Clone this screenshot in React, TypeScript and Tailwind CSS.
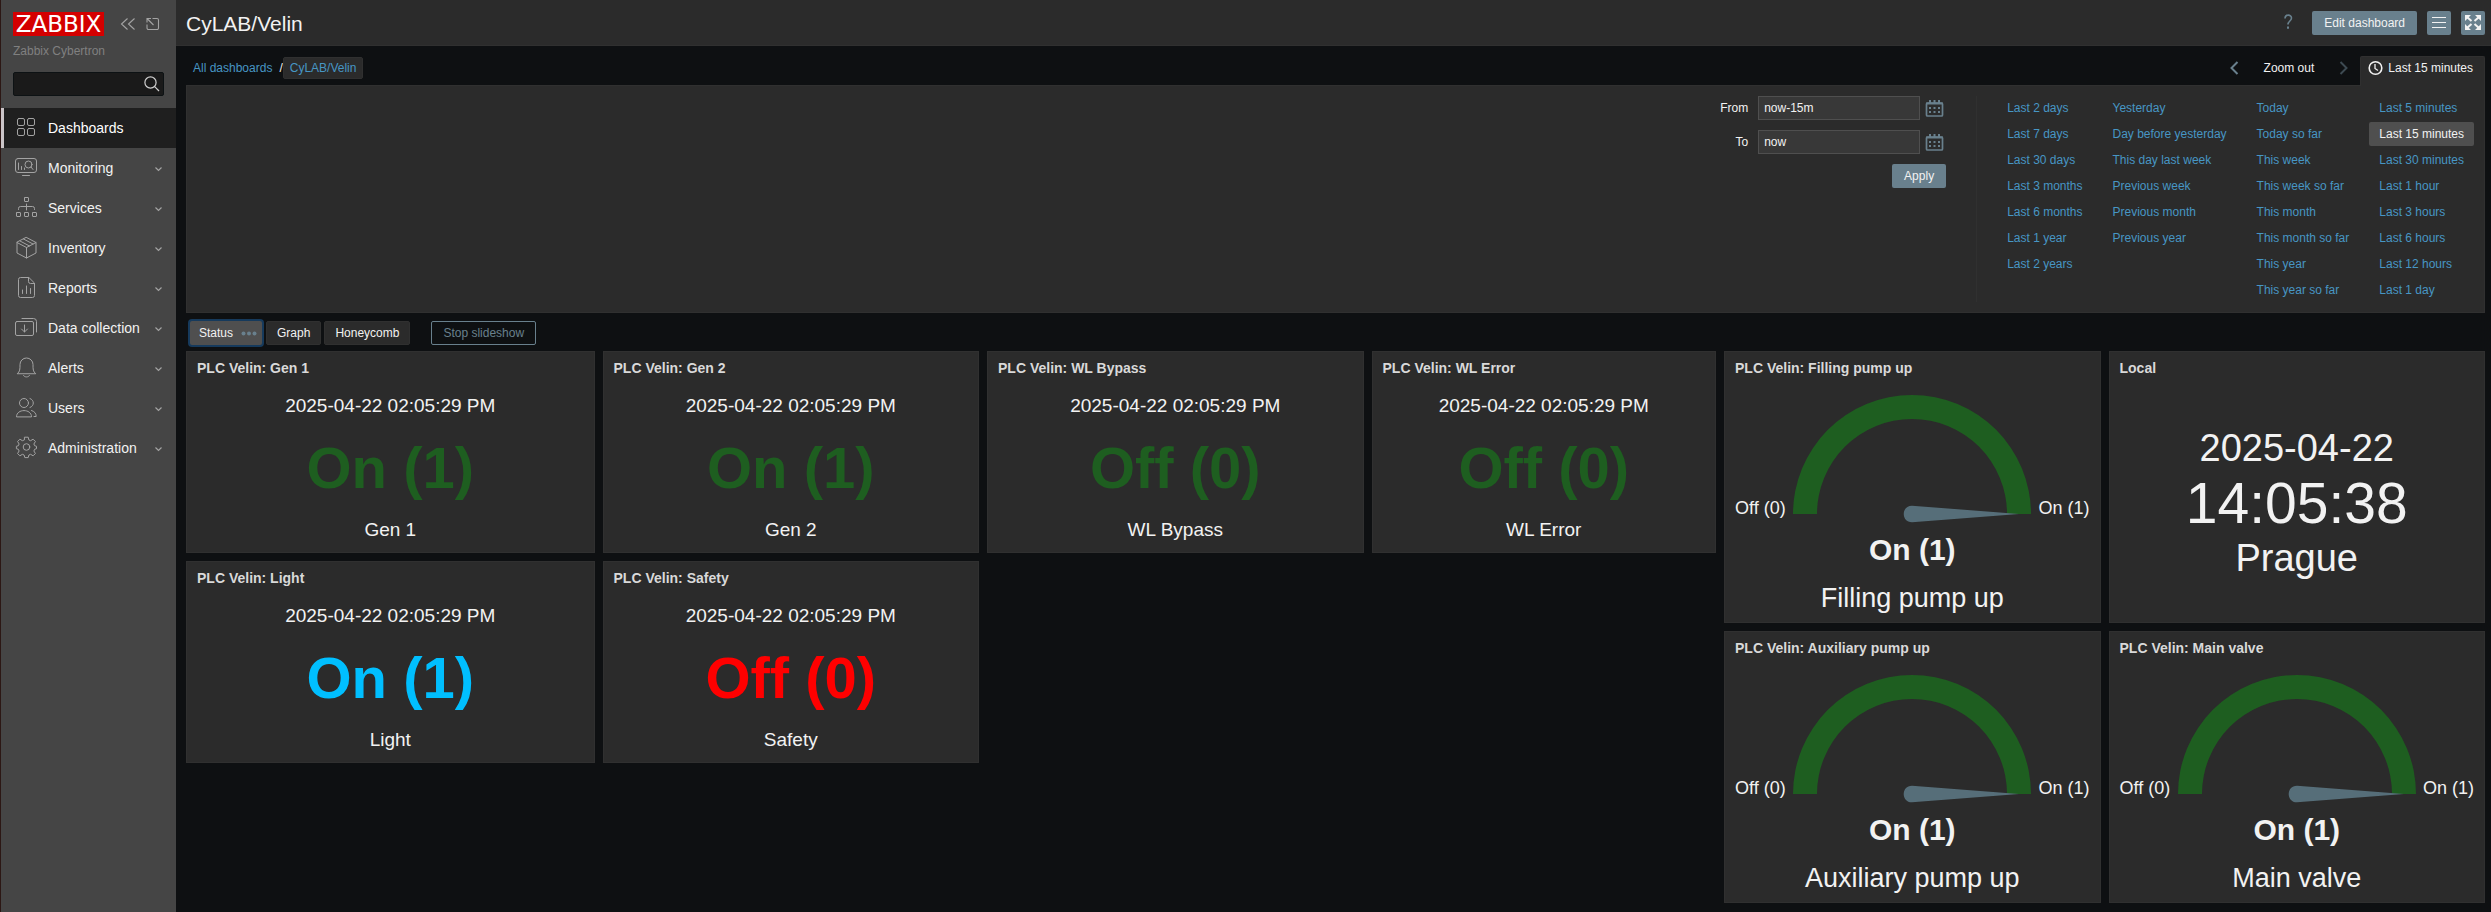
import React from "react";

type IconProps = { children: React.ReactNode };

function NavIcon({ children }: IconProps) {
  return (
    <svg
      className="size-6 shrink-0 text-[#a3a3a3]"
      viewBox="0 0 24 24"
      fill="none"
      stroke="currentColor"
      strokeWidth="1"
      strokeLinecap="round"
      strokeLinejoin="round"
      aria-hidden="true"
    >
      {children}
    </svg>
  );
}

const navItems: { label: string; icon: React.ReactNode }[] = [
  {
    label: "Dashboards",
    icon: (
      <>
        <rect x="3.5" y="2.5" width="7" height="7" rx="1.5" />
        <rect x="13.5" y="2.5" width="7" height="7" rx="1.5" />
        <rect x="3.5" y="12.5" width="7" height="7" rx="1.5" />
        <rect x="13.5" y="12.5" width="7" height="7" rx="1.5" />
      </>
    ),
  },
  {
    label: "Monitoring",
    icon: (
      <>
        <rect x="1.5" y="2.5" width="21" height="14" rx="2.5" />
        <path d="M8.5 19.5h7M4.5 7v6.500M7.5 10.500v3M10.500 12v1.500M17 11l2 2.500" />
        <circle cx="14.500" cy="8.500" r="3.500" />
      </>
    ),
  },
  {
    label: "Services",
    icon: (
      <>
        <rect x="10.500" y="1.500" width="4" height="4" rx="0.500" />
        <rect x="2.500" y="16.500" width="4" height="4" rx="0.500" />
        <rect x="10.500" y="16.500" width="4" height="4" rx="0.500" />
        <rect x="18.500" y="16.500" width="4" height="4" rx="0.500" />
        <path d="M12.500 8v6M4.500 13.500v-1a2 2 0 0 1 2-2h12a2 2 0 0 1 2 2v1" />
      </>
    ),
  },
  {
    label: "Inventory",
    icon: (
      <>
        <path d="M12.500 1.500l9.500 5v10.500l-9.500 5-9.500-5V6.500z" />
        <path d="M3 6.500l9.500 5 9.500-5M12.500 11.500V22M6 5l9.500 5M9.500 3l9.500 5" />
      </>
    ),
  },
  {
    label: "Reports",
    icon: (
      <>
        <path d="M14.500 1.500h-8a2 2 0 0 0-2 2v16a2 2 0 0 0 2 2h12a2 2 0 0 0 2-2V7.500z" />
        <path d="M14.500 1.500v4a2 2 0 0 0 2 2h4M8.500 14v3.500M12.500 10v7.500M16.500 12.500v5" />
      </>
    ),
  },
  {
    label: "Data collection",
    icon: (
      <>
        <rect x="1.500" y="5.500" width="18" height="14" rx="1.500" />
        <path d="M9.500 2.500h10a3 3 0 0 1 3 3v10.500M8 2.500h1.500M10.500 9v7M7.500 13l3 3 3-3" />
      </>
    ),
  },
  {
    label: "Alerts",
    icon: (
      <path d="M3.500 17.500c2.500-2 2.500-4 2.500-9a6.500 6.500 0 0 1 13 0c0 5 0 7 2.500 9zM9.500 19.500c1.500 2 4.500 2 6 0" />
    ),
  },
  {
    label: "Users",
    icon: (
      <>
        <circle cx="10" cy="7" r="4.500" />
        <path d="M2.500 20.500c0-8 15-8 15 0zM16 2.500c4.500 1.500 4.500 7.500 0 9M17.500 14.500c3 .8 4.700 3 4.700 6h-2.200" />
      </>
    ),
  },
  {
    label: "Administration",
    icon: (
      <>
        <circle cx="12.500" cy="11" r="3.300" />
        <path d="M10.800 1.200h3.400l.7 2.800 1.700.7 2.500-1.500 2.300 2.300-1.500 2.500.7 1.700 1.900.6v2.400l-1.900.6-.7 1.700 1.500 2.500-2.300 2.300-2.500-1.500-1.700.7-.7 2.600h-3.400l-.7-2.600-1.700-.7-2.500 1.500-2.300-2.300 1.500-2.500-.7-1.700-2-.6v-2.400l2-.6.7-1.700-1.500-2.500 2.300-2.300 2.500 1.500 1.700-.7z" />
      </>
    ),
  },
];

function Sidebar() {
  return (
    <aside className="flex w-44 shrink-0 flex-col border-l border-[#2c1714] bg-[#454545]">
      <div className="flex items-center px-3 pt-3">
        <a href="#" className="flex h-6 w-[91px] items-center justify-center bg-[#d40000] font-['DejaVu_Sans',sans-serif] text-[23px] leading-6 text-white">
          ZABBIX
        </a>
        <button type="button" aria-label="Collapse sidebar" className="ml-3.5 flex size-5 items-center justify-center">
          <svg className="size-5" viewBox="0 0 20 20" fill="none" stroke="#a3a3a3" strokeWidth="1.100" aria-hidden="true">
            <path d="M9.500 4.500L3.500 10l6 5.500M16.500 4.500L10.500 10l6 5.500" />
          </svg>
        </button>
        <button type="button" aria-label="Hide sidebar" className="ml-1 flex size-5 items-center justify-center">
          <svg className="size-5" viewBox="0 0 20 20" fill="none" stroke="#a3a3a3" strokeWidth="1.100" aria-hidden="true">
            <path d="M10.500 4.500h4.500a1.500 1.500 0 0 1 1.500 1.500v8a1.500 1.500 0 0 1-1.500 1.500H6.500A1.500 1.500 0 0 1 5 14v-3.500M11.500 11L5 4.500M5 8.500v-4h4" />
          </svg>
        </button>
      </div>
      <div className="px-3 pt-[7px] leading-4 text-[#808080]">Zabbix Cybertron</div>
      <form className="mx-3 mt-[13px] flex h-6 items-center rounded-[2px] border border-[#0d1214] bg-[#1a1a1a]" onSubmit={(e) => e.preventDefault()}>
        <input type="search" aria-label="Search" className="h-full min-w-0 flex-1 bg-transparent px-1 text-[#f2f2f2] outline-none" />
        <button type="submit" aria-label="Search" className="flex size-5 items-center justify-center">
          <svg className="size-5" viewBox="0 0 20 20" fill="none" stroke="#cfcfcf" strokeWidth="1.200" aria-hidden="true">
            <circle cx="7.500" cy="8.500" r="5.600" />
            <path d="M11.700 12.700L16 17" />
          </svg>
        </button>
      </form>
      <nav className="mt-3">
        {navItems.map((item, i) => (
          <a
            key={item.label}
            href="#"
            className={
              i === 0
                ? "flex h-10 items-center border-l-[3px] border-[#cbc5c8] bg-[#1f1f1f] pl-2.5 text-sm text-white"
                : "flex h-10 items-center border-l-[3px] border-transparent pl-2.5 text-sm text-[#f2f2f2]"
            }
          >
            <NavIcon>{item.icon}</NavIcon>
            <span className="ml-2.5 flex-1">{item.label}</span>
            {i > 0 && (
              <svg className="mr-3 size-3" viewBox="0 0 12 12" fill="none" stroke="#a3a3a3" strokeWidth="1.200" aria-hidden="true">
                <path d="M3.500 5.500l3 3 3-3" />
              </svg>
            )}
          </a>
        ))}
      </nav>
    </aside>
  );
}

function Header() {
  const button = "h-6 rounded-[2px] bg-[#69808d] text-[#f2f2f2]";
  return (
    <header className="flex h-[46px] items-center gap-2.5 border-b border-[#303030] bg-[#2b2b2b] pr-1.5 pl-2.5">
      <h1 className="flex-1 pt-0.5 text-[21px] leading-6 text-[#f2f2f2]">CyLAB/Velin</h1>
      <a href="#" aria-label="Help" className="mr-2 flex h-6 items-center">
        <svg className="h-6 w-3" viewBox="0 0 12 24" fill="none" stroke="#69808d" strokeWidth="1.600" aria-hidden="true">
          <path d="M3 7.500c0-4.500 6.500-4.300 6.500-.5 0 3-3.500 3-3.500 6.500" />
          <path d="M6 15.500v2.200" strokeWidth="2" />
        </svg>
      </a>
      <button type="button" className={button + " px-3"}>Edit dashboard</button>
      <button type="button" aria-label="Actions" className={button + " w-6"}>
        <svg className="size-6" viewBox="0 0 24 24" stroke="#f2f2f2" strokeWidth="1" aria-hidden="true">
          <path d="M5 6.500h14M5 11.500h14M5 16.500h14" />
        </svg>
      </button>
      <button type="button" aria-label="Kiosk mode" className={button + " w-6"}>
        <svg className="size-6" viewBox="0 0 24 24" fill="#f2f2f2" stroke="#f2f2f2" aria-hidden="true">
          <path stroke="none" d="M4 4h6l-6 6zM20 4h-6l6 6zM4 19v-6l6 6zM20 19v-6l-6 6z" />
          <path strokeWidth="2" d="M6 6l4.500 4M18 6l-4.500 4M6 17l4.500-4M18 17l-4.500-4" />
        </svg>
      </button>
    </header>
  );
}

const ranges: string[][] = [
  ["Last 2 days", "Last 7 days", "Last 30 days", "Last 3 months", "Last 6 months", "Last 1 year", "Last 2 years"],
  ["Yesterday", "Day before yesterday", "This day last week", "Previous week", "Previous month", "Previous year"],
  ["Today", "Today so far", "This week", "This week so far", "This month", "This month so far", "This year", "This year so far"],
  ["Last 5 minutes", "Last 15 minutes", "Last 30 minutes", "Last 1 hour", "Last 3 hours", "Last 6 hours", "Last 12 hours", "Last 1 day"],
];

function TimeField({ id, label, value }: { id: string; label: string; value: string }) {
  return (
    <div className="flex items-center">
      <label htmlFor={id} className="mr-2.5 flex-1 text-right text-[#f2f2f2]">{label}</label>
      <input id={id} type="text" defaultValue={value} className="h-6 w-[162px] border border-[#4f4f4f] bg-[#383838] px-[5px] text-[#f2f2f2] outline-none" />
      <button type="button" aria-label={label + " calendar"} className="ml-0.5 flex size-6 items-center justify-center">
        <svg className="size-6" viewBox="0 0 24 24" fill="none" stroke="#69808d" aria-hidden="true">
          <rect x="4.500" y="7" width="16" height="13" rx="1" strokeWidth="1.700" />
          <path d="M4 7.500h17" strokeWidth="2" />
          <path d="M8 4v3M12.500 4v3M17 4v3" strokeWidth="2" />
          <path d="M7 12h12M7 16h12" strokeWidth="2" strokeDasharray="2 2.500" />
        </svg>
      </button>
    </div>
  );
}

function TimeSelector() {
  return (
    <section className="px-2.5 pr-1.5 pt-2.5">
      <div className="flex h-[30px] items-center">
        <nav aria-label="Breadcrumb" className="flex items-center pb-1.5 pl-[7px]">
          <a href="#" className="mr-[7px] text-[#4796c4]">All dashboards</a>
          <span className="text-[#f2f2f2]">/</span>
          <a href="#" className="flex h-[22px] items-center rounded-[2px] border border-[#303030] bg-[#2b2b2b] px-1.5 text-[#4796c4]">CyLAB/Velin</a>
        </nav>
        <div className="ml-auto flex h-full">
          <button type="button" aria-label="Previous period" className="flex h-6 w-8 items-center justify-center">
            <svg className="size-4" viewBox="0 0 16 16" fill="none" stroke="#69808d" strokeWidth="2" aria-hidden="true">
              <path d="M11.500 2L5.500 8l6 6" />
            </svg>
          </button>
          <button type="button" className="mx-1.5 h-6 px-2 text-[#f2f2f2]">Zoom out</button>
          <button type="button" aria-label="Next period" className="flex h-6 w-8 items-center justify-center">
            <svg className="size-4" viewBox="0 0 16 16" fill="none" stroke="#3d4a52" strokeWidth="2" aria-hidden="true">
              <path d="M4.500 2l6 6-6 6" />
            </svg>
          </button>
          <button type="button" className="z-10 flex h-[30px] items-start rounded-t-[2px] border border-b-0 border-[#303030] bg-[#2b2b2b] pr-[11px] pl-[7px] text-[#f2f2f2]">
            <svg className="mt-[3px] mr-1 size-4" viewBox="0 0 16 16" fill="none" stroke="#f2f2f2" strokeWidth="1.600" aria-hidden="true">
              <circle cx="7.500" cy="8" r="6.300" />
              <path d="M7 4v4.500l3 2" strokeWidth="1.300" />
            </svg>
            <span className="leading-[22px]">Last 15 minutes</span>
          </button>
        </div>
      </div>
      <div className="-mt-px flex justify-end border border-[#303030] bg-[#2b2b2b] p-2.5">
        <form className="flex flex-col gap-2.5" onSubmit={(e) => e.preventDefault()}>
          <TimeField id="from" label="From" value="now-15m" />
          <TimeField id="to" label="To" value="now" />
          <button type="submit" className="h-6 self-end rounded-[2px] bg-[#69808d] px-3 text-[#f2f2f2]">Apply</button>
        </form>
        <div className="ml-[30px] flex gap-2.5 border-l border-[#303030] pl-5">
          {ranges.map((column) => (
            <ul key={column[0]} className="flex flex-col gap-0.5">
              {column.map((range) => (
                <li key={range}>
                  <a
                    href="#"
                    className={
                      range === "Last 15 minutes"
                        ? "block h-6 rounded-[2px] bg-[#4f4f4f] px-2.5 leading-6 whitespace-nowrap text-[#f2f2f2]"
                        : "block h-6 px-2.5 leading-6 whitespace-nowrap text-[#4796c4]"
                    }
                  >
                    {range}
                  </a>
                </li>
              ))}
            </ul>
          ))}
        </div>
      </div>
    </section>
  );
}

function PageTabs() {
  const tab = "h-6 rounded-[2px] border border-[#303030] bg-[#2b2b2b] px-2.5 text-[#f2f2f2]";
  return (
    <div className="flex items-center pt-2 pl-3.5">
      <button type="button" className="mr-1 flex h-6 items-center rounded-[2px] bg-[#4f4f4f] pr-[5px] pl-[9px] text-[#f2f2f2] ring-2 ring-[#163a5c]">
        Status
        <svg className="ml-2 h-2 w-4" viewBox="0 0 16 8" fill="#69808d" aria-hidden="true">
          <circle cx="2.500" cy="4.500" r="2" />
          <circle cx="8" cy="4.500" r="2" />
          <circle cx="13.500" cy="4.500" r="2" />
        </svg>
      </button>
      <button type="button" className={tab + " mr-[3px]"}>Graph</button>
      <button type="button" className={tab + " mr-[21px]"}>Honeycomb</button>
      <button type="button" className="h-6 rounded-[2px] border border-[#69808d] px-[11px] text-[#69808d]">Stop slideshow</button>
    </div>
  );
}

function Widget({ title, place, children }: { title: string; place: string; children: React.ReactNode }) {
  return (
    <article className={"m-1 flex min-w-0 flex-col border border-[#303030] bg-[#2b2b2b] " + place}>
      <h4 className="px-2.5 pt-2 text-sm leading-4 font-bold text-[#d9d9d9]">{title}</h4>
      {children}
    </article>
  );
}

function ItemValue({ value, label, color }: { value: string; label: string; color: string }) {
  return (
    <div className="flex flex-1 flex-col items-center justify-between pt-[18px] pb-2.5 text-[#f2f2f2]">
      <div className="text-[19px] leading-6">2025-04-22 02:05:29 PM</div>
      <div className={"text-[58px] leading-[60px] font-bold " + color}>{value}</div>
      <div className="text-[19px] leading-6">{label}</div>
    </div>
  );
}

function Gauge({ label }: { label: string }) {
  return (
    <div className="flex flex-col items-center pt-[19px] text-[#f2f2f2]">
      <div className="flex w-full items-end justify-between px-2.5 text-lg leading-5">
        <span className="mb-[5px]">Off (0)</span>
        <svg className="h-32 w-60" viewBox="0 0 240 128" aria-hidden="true">
          <path d="M1 119a119 119 0 0 1 238 0h-24a95 95 0 0 0-190 0z" fill="#1e5e20" />
          <path d="M120 110.700l107 8.300-107 8.300c-11 0-11-16.600 0-16.600z" fill="#566e79" />
        </svg>
        <span className="mb-[5px]">On (1)</span>
      </div>
      <div className="mt-[9px] text-[30px] leading-9 font-bold">On (1)</div>
      <div className="mt-3.5 text-[27px] leading-8">{label}</div>
    </div>
  );
}

const items = [
  { name: "Gen 1", value: "On (1)", color: "text-[#1e5e20]", place: "col-[1/span_13] row-[1/span_3]" },
  { name: "Gen 2", value: "On (1)", color: "text-[#1e5e20]", place: "col-[14/span_12] row-[1/span_3]" },
  { name: "WL Bypass", value: "Off (0)", color: "text-[#1e5e20]", place: "col-[26/span_12] row-[1/span_3]" },
  { name: "WL Error", value: "Off (0)", color: "text-[#1e5e20]", place: "col-[38/span_11] row-[1/span_3]" },
  { name: "Light", value: "On (1)", color: "text-[#00bfff]", place: "col-[1/span_13] row-[4/span_3]" },
  { name: "Safety", value: "Off (0)", color: "text-[#ff0000]", place: "col-[14/span_12] row-[4/span_3]" },
];

const gauges = [
  { name: "Filling pump up", place: "col-[49/span_12] row-[1/span_4]" },
  { name: "Auxiliary pump up", place: "col-[49/span_12] row-[5/span_4]" },
  { name: "Main valve", place: "col-[61/span_12] row-[5/span_4]" },
];

export default function App() {
  return (
    <div className="flex min-h-screen bg-[#0e1012] font-['Liberation_Sans',Arial,sans-serif] text-xs">
      <Sidebar />
      <div className="min-w-0 flex-1">
        <Header />
        <TimeSelector />
        <PageTabs />
        <main className="mt-0.5 grid auto-rows-[70px] grid-cols-[repeat(72,minmax(0,1fr))] pr-0.5 pl-1.5">
          {items.map((item) => (
            <Widget key={item.name} title={"PLC Velin: " + item.name} place={item.place}>
              <ItemValue value={item.value} label={item.name} color={item.color} />
            </Widget>
          ))}
          {gauges.map((gauge) => (
            <Widget key={gauge.name} title={"PLC Velin: " + gauge.name} place={gauge.place}>
              <Gauge label={gauge.name} />
            </Widget>
          ))}
          <Widget title="Local" place="col-[61/span_12] row-[1/span_4]">
            <div className="flex flex-1 flex-col items-center justify-center pt-2 text-[38px] leading-[50px] text-[#f2f2f2]">
              <div>2025-04-22</div>
              <time className="text-[57px] leading-[60px]">14:05:38</time>
              <div>Prague</div>
            </div>
          </Widget>
        </main>
      </div>
    </div>
  );
}
